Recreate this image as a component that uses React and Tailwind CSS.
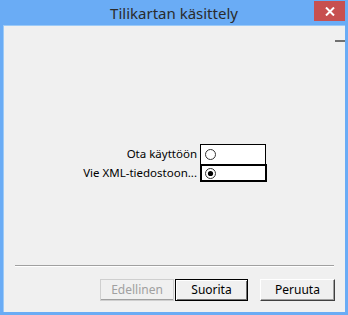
import React from "react";

function Radio({ checked }) {
  return (
    <svg width="11" height="11" viewBox="0 0 11 11" className="block">
      <circle cx="5.5" cy="5.5" r="5" fill="#ffffff" stroke="#333333" strokeWidth="1" />
      {checked && <circle cx="5.5" cy="5.5" r="2.6" fill="#000000" />}
    </svg>
  );
}

export default function App() {
  return (
    <div
      className="flex h-[315px] w-[348px] flex-col bg-[#6aacf5]"
      style={{ fontFamily: '"Noto Sans", "Liberation Sans", sans-serif' }}
    >
      <header className="relative flex h-[25px] items-center justify-center">
        <span className="pt-[1px] text-[15px] leading-none text-[#2b2b2b]">
          Tilikartan käsittely
        </span>
        <div className="absolute right-[3px] top-[1px] flex h-[20px] w-[31px] items-center justify-center bg-[#c75050]">
          <svg width="10" height="9" viewBox="0 0 10 9">
            <path d="M1 0.5 L9 8.5 M9 0.5 L1 8.5" stroke="#ffffff" strokeWidth="2" />
          </svg>
        </div>
      </header>

      <main className="mx-[3px] mb-[3px] flex flex-1 flex-col border-t border-l border-[#9ccaf7] bg-[#f0f0f0] text-[11.5px] text-black">
        <div className="flex justify-end pt-[14px]">
          <div className="h-[2px] w-[10px] bg-[#707070]" />
        </div>

        <div className="mt-[102px] flex flex-col">
          <div className="flex items-center">
            <span className="w-[196px] pr-[3px] text-right leading-[20px]">Ota käyttöön</span>
            <div className="flex h-[20px] w-[66px] items-center border border-b-0 border-black bg-white pl-[4px]">
              <Radio />
            </div>
          </div>
          <div className="flex items-center">
            <span className="w-[196px] pr-[3px] text-right leading-[18px]">Vie XML-tiedostoon...</span>
            <div className="flex h-[18px] w-[67px] items-center border-2 border-black bg-white pl-[3px]">
              <Radio checked />
            </div>
          </div>
        </div>

        <div className="mx-[11px] mt-[83px] h-[2px] border-t border-b border-t-[#a0a0a0] border-b-white" />

        <div className="mt-[12px] flex pl-[96px] text-[12px]">
          <button className="h-[22px] w-[74px] border border-[#cfcfcf] bg-[#f0f0f0] text-[#a0a0a0] shadow-[inset_0_-1px_0_#a0a0a0]">
            Edellinen
          </button>
          <button className="ml-[1px] h-[22px] w-[73px] border border-black bg-[#f0f0f0] text-black shadow-[inset_1px_1px_0_#ffffff,inset_-1px_-1px_0_#707070]">
            Suorita
          </button>
          <button className="ml-[12px] h-[22px] w-[75px] border border-t-white border-l-white border-r-[#404040] border-b-[#404040] bg-[#f0f0f0] text-black shadow-[inset_-1px_-1px_0_#a0a0a0]">
            Peruuta
          </button>
        </div>
      </main>
    </div>
  );
}
